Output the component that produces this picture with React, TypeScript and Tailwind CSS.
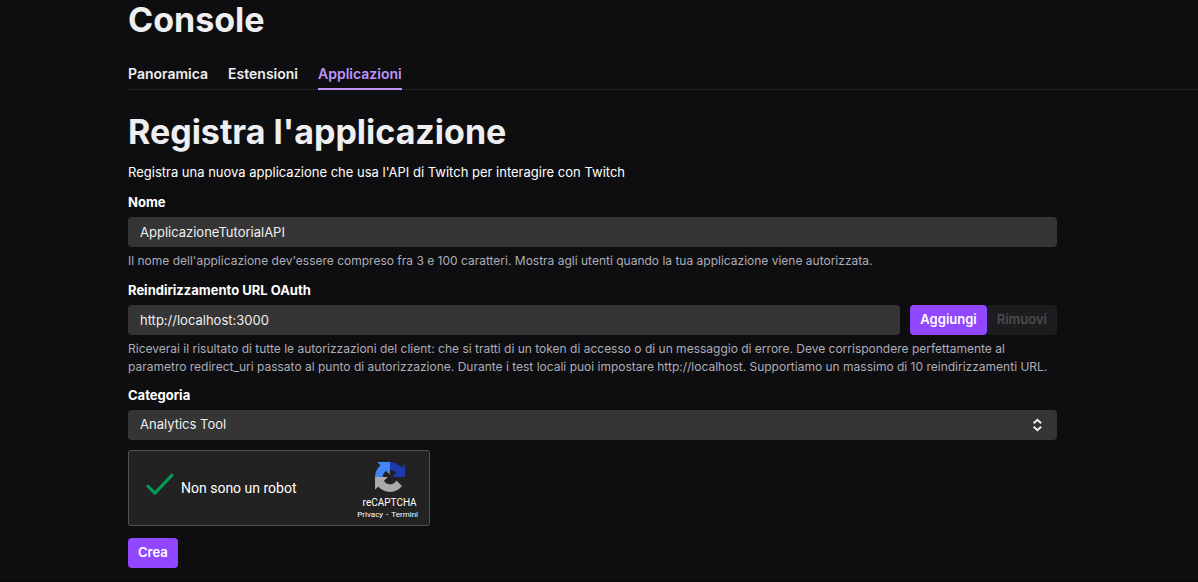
import { useState } from "react";
import type { ReactNode } from "react";

const tabs = [
  { label: "Panoramica", active: false },
  { label: "Estensioni", active: false },
  { label: "Applicazioni", active: true },
];

const fieldClass =
  "h-[30px] w-full min-w-0 rounded-[4px] bg-[#353535] px-3 text-[13px] text-[#efeff1] outline-none focus:ring-2 focus:ring-[#9147ff]";

function FieldLabel({ htmlFor, children }: { htmlFor: string; children: ReactNode }) {
  return (
    <label htmlFor={htmlFor} className="mb-[5px] block text-[13px] leading-5 font-bold text-white">
      {children}
    </label>
  );
}

function Hint({ children }: { children: ReactNode }) {
  return <p className="mt-[5px] text-xs leading-[18px] text-[#adadb8]">{children}</p>;
}

function RecaptchaLogo() {
  return (
    <svg viewBox="0 0 64 64" className="size-[30px]" aria-hidden="true">
      <path
        fill="#1c3aa9"
        d="M64 31.955l-.033-1.37V4.687l-7.16 7.16C50.948 4.674 42.033.093 32.05.093c-10.4 0-19.622 4.96-25.458 12.64l11.736 11.86a15.55 15.55 0 0 1 4.754-5.334c2.05-1.6 4.952-2.906 8.968-2.906.485 0 .86.057 1.135.163 4.976.393 9.288 3.14 11.828 7.124l-8.307 8.307L64 31.953"
      />
      <path
        fill="#4285f4"
        d="M31.862.094l-1.37.033H4.594l7.16 7.16C4.58 13.147 0 22.06 0 32.046c0 10.4 4.96 19.622 12.64 25.458L24.5 45.768a15.55 15.55 0 0 1-5.334-4.754c-1.6-2.05-2.906-4.952-2.906-8.968 0-.485.057-.86.163-1.135.393-4.976 3.14-9.288 7.124-11.828l8.307 8.307L31.86.095"
      />
      <path
        fill="#ababab"
        d="M.001 32.045l.033 1.37v25.898l7.16-7.16c5.86 7.173 14.774 11.754 24.76 11.754 10.4 0 19.622-4.96 25.458-12.64l-11.736-11.86a15.55 15.55 0 0 1-4.754 5.334c-2.05 1.6-4.952 2.906-8.968 2.906-.485 0-.86-.057-1.135-.163-4.976-.393-9.288-3.14-11.828-7.124l8.307-8.307c-10.522.04-22.4.066-27.295-.005"
      />
    </svg>
  );
}

function Recaptcha() {
  const [checked, setChecked] = useState(true);
  return (
    <div className="mt-[10px] flex h-[76px] w-[302px] justify-between rounded-[3px] border border-[#525252] bg-[#222] pr-[11px] pl-4 font-[Roboto,sans-serif] text-white">
      <div className="flex items-center gap-1">
        <span className="grid h-8 w-8 place-items-center">
          <input
            id="robot"
            type="checkbox"
            checked={checked}
            onChange={(e) => setChecked(e.target.checked)}
            className="col-start-1 row-start-1 size-7 appearance-none rounded-sm border-2 border-[#c1c1c1] bg-[#f9f9f9] checked:border-transparent checked:bg-transparent"
          />
          {checked && (
            <svg viewBox="0 0 32 32" className="pointer-events-none col-start-1 row-start-1 size-8" aria-hidden="true">
              <path d="M1.9 13.2l8 7.8L27.8 2.4" fill="none" stroke="#009e55" strokeWidth="3" />
            </svg>
          )}
        </span>
        <label htmlFor="robot" className="text-sm leading-5">
          Non sono un robot
        </label>
      </div>
      <div className="flex flex-col items-center justify-end pb-1">
        <div className="flex flex-col items-center gap-[5px] pl-1">
          <RecaptchaLogo />
          <span className="text-[10px] leading-3">reCAPTCHA</span>
        </div>
        <span className="flex gap-[3px] text-[8px] leading-3">
          <a href="#privacy">Privacy</a>
          <span aria-hidden="true">-</span>
          <a href="#termini">Termini</a>
        </span>
      </div>
    </div>
  );
}

export default function App() {
  const [name, setName] = useState("ApplicazioneTutorialAPI");
  const [url, setUrl] = useState("http://localhost:3000");

  return (
    <div className="min-h-screen border-b-2 border-[#08080a] bg-[#0e0e10] pl-32 font-[Inter,sans-serif] text-[#efeff1]">
      <header>
        <h1 className="text-[34px] leading-10 font-bold">Console</h1>
        <nav className="mt-6 flex gap-5 border-b border-[#232326]">
          {tabs.map((tab) => (
            <a
              key={tab.label}
              href={"#" + tab.label.toLowerCase()}
              aria-current={tab.active ? "page" : undefined}
              className={
                tab.active
                  ? "-mb-px border-b-2 border-[#bf94ff] pb-1 text-sm leading-5 font-semibold text-[#bf94ff]"
                  : "pb-1 text-sm leading-5 font-semibold"
              }
            >
              {tab.label}
            </a>
          ))}
        </nav>
      </header>

      <main className="mr-[141px]">
        <h2 className="mt-[22px] text-[34px] leading-10 font-bold">Registra l'applicazione</h2>
        <p className="mt-[10px] text-[13px] leading-5 text-white">
          Registra una nuova applicazione che usa l'API di Twitch per interagire con Twitch
        </p>

        <form onSubmit={(e) => e.preventDefault()} className="mt-[10px]">
          <div>
            <FieldLabel htmlFor="name">Nome</FieldLabel>
            <input id="name" type="text" value={name} onChange={(e) => setName(e.target.value)} className={fieldClass} />
            <Hint>
              Il nome dell'applicazione dev'essere compreso fra 3 e 100 caratteri. Mostra agli utenti quando la tua
              applicazione viene autorizzata.
            </Hint>
          </div>

          <div className="mt-[10px]">
            <FieldLabel htmlFor="redirect">Reindirizzamento URL OAuth</FieldLabel>
            <div className="flex">
              <input id="redirect" type="text" value={url} onChange={(e) => setUrl(e.target.value)} className={fieldClass} />
              <button type="button" className="ml-[10px] h-[30px] rounded-[4px] bg-[#9147ff] px-[10px] text-[13px] font-semibold text-white">
                Aggiungi
              </button>
              <button type="button" disabled className="h-[30px] rounded-[4px] bg-[#1d1d1f] px-[10px] text-[13px] font-semibold text-[#4b4b4d]">
                Rimuovi
              </button>
            </div>
            <Hint>
              Riceverai il risultato di tutte le autorizzazioni del client: che si tratti di un token di accesso o di un
              messaggio di errore. Deve corrispondere perfettamente al parametro redirect_uri passato al punto di
              autorizzazione. Durante i test locali puoi impostare http://localhost. Supportiamo un massimo di 10
              reindirizzamenti URL.
            </Hint>
          </div>

          <div className="mt-[9px]">
            <FieldLabel htmlFor="category">Categoria</FieldLabel>
            <div className="grid items-center">
              <select id="category" defaultValue="analytics" className={fieldClass + " col-start-1 row-start-1 appearance-none"}>
                <option value="analytics">Analytics Tool</option>
              </select>
              <svg
                viewBox="0 0 20 20"
                className="pointer-events-none col-start-1 row-start-1 mr-[10px] size-5 justify-self-end"
                fill="none"
                stroke="#efeff1"
                strokeWidth="2"
                aria-hidden="true"
              >
                <path d="M6.7 8.2L10.4 4.8l3.7 3.4M6.7 11.8l3.7 3.4 3.7-3.4" />
              </svg>
            </div>
          </div>

          <Recaptcha />

          <button type="submit" className="mt-3 h-[30px] rounded-[4px] bg-[#9147ff] px-[10px] text-[13px] font-semibold text-white">
            Crea
          </button>
        </form>
      </main>
    </div>
  );
}
